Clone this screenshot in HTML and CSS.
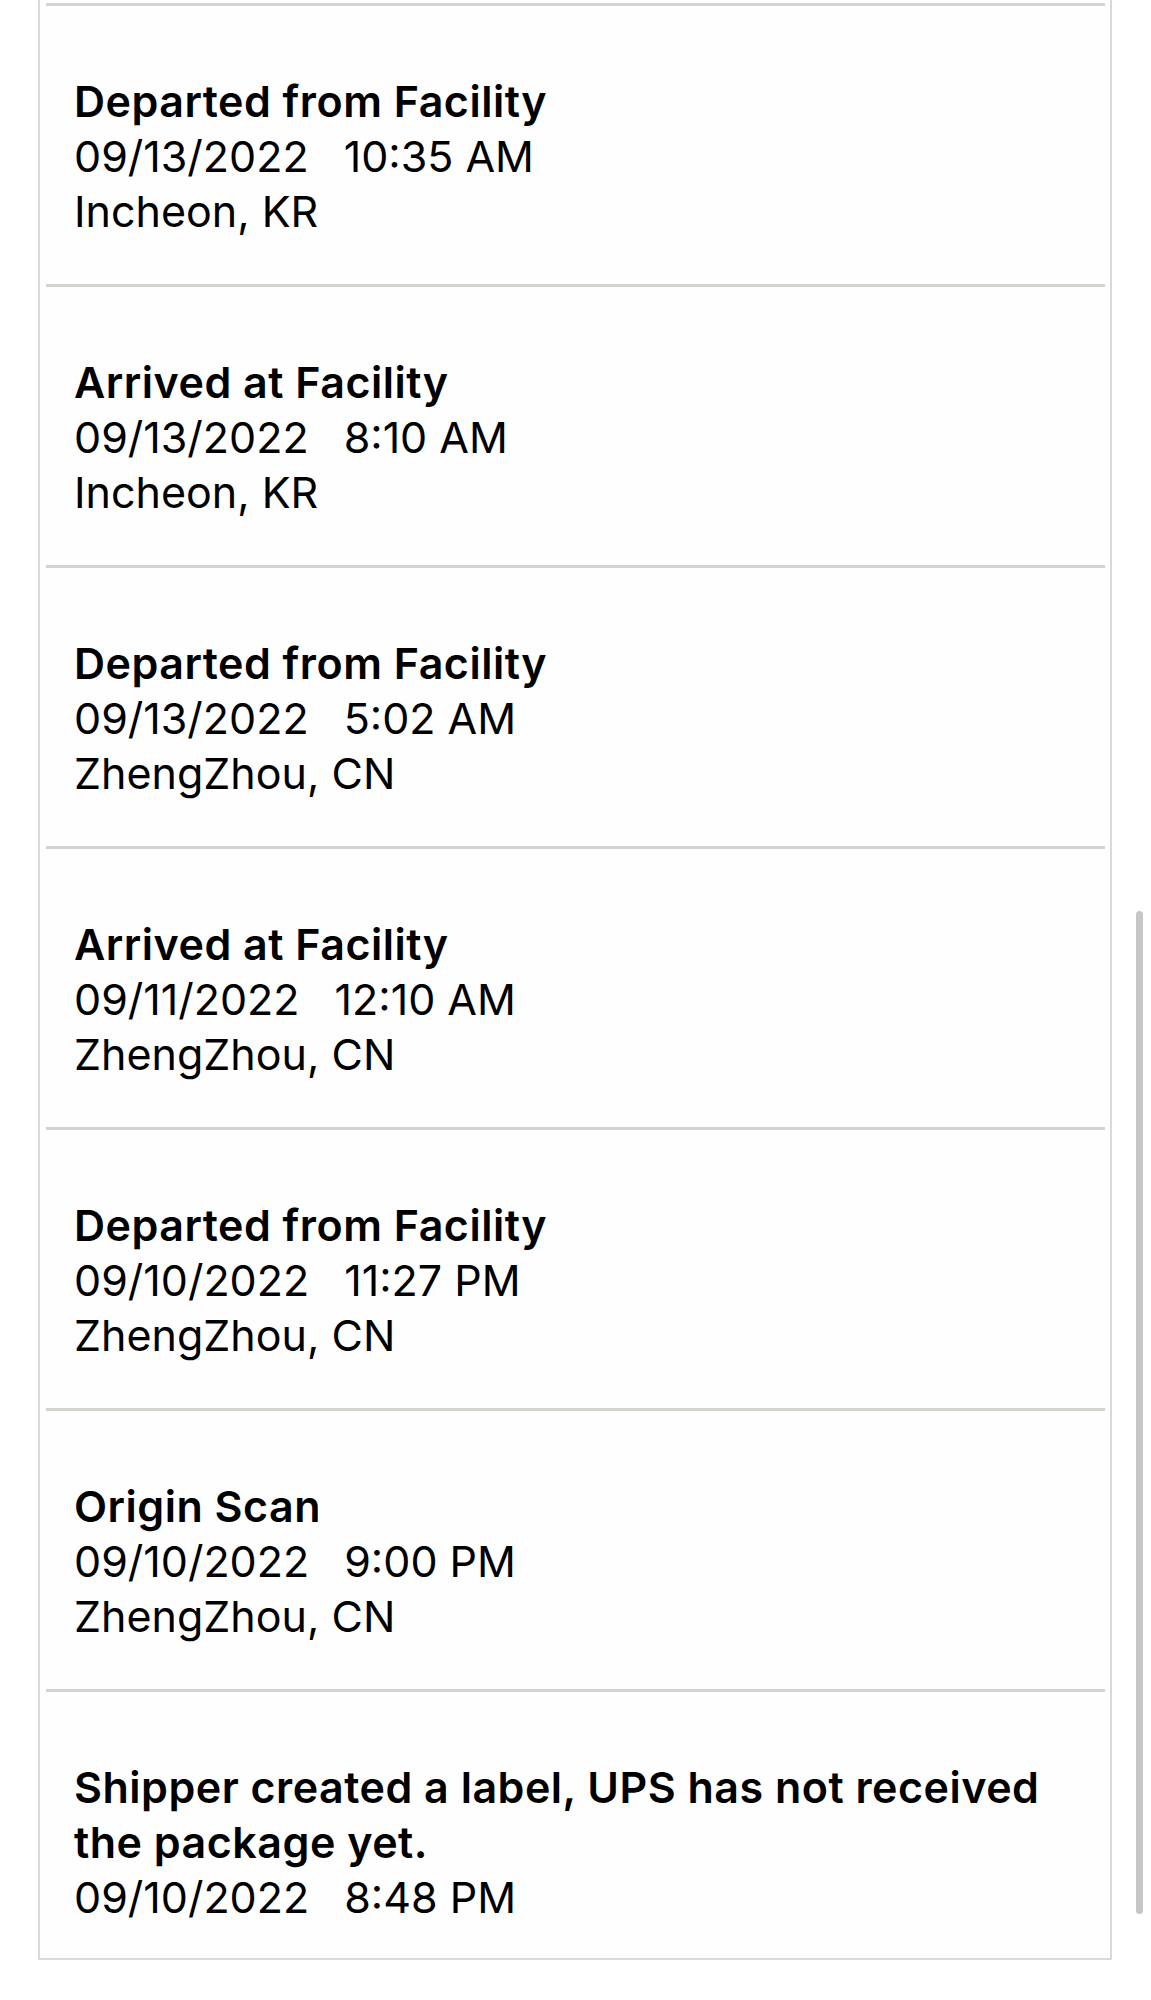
FILE: index.html
```html
<!DOCTYPE html>
<html lang="en">
<head>
<meta charset="utf-8">
<title>Tracking history</title>
<link rel="stylesheet" href="styles.css">
</head>
<body>
<div class="card">
  <div class="event">
    <div class="title">Departed from Facility</div>
    <div class="when"><span class="date">09/13/2022</span><span>10:35 AM</span></div>
    <div class="place">Incheon, KR</div>
  </div>
  <div class="event">
    <div class="title">Arrived at Facility</div>
    <div class="when"><span class="date">09/13/2022</span><span>8:10 AM</span></div>
    <div class="place">Incheon, KR</div>
  </div>
  <div class="event">
    <div class="title">Departed from Facility</div>
    <div class="when"><span class="date">09/13/2022</span><span>5:02 AM</span></div>
    <div class="place">ZhengZhou, CN</div>
  </div>
  <div class="event">
    <div class="title">Arrived at Facility</div>
    <div class="when"><span class="date">09/11/2022</span><span>12:10 AM</span></div>
    <div class="place">ZhengZhou, CN</div>
  </div>
  <div class="event">
    <div class="title">Departed from Facility</div>
    <div class="when"><span class="date">09/10/2022</span><span>11:27 PM</span></div>
    <div class="place">ZhengZhou, CN</div>
  </div>
  <div class="event">
    <div class="title">Origin Scan</div>
    <div class="when"><span class="date">09/10/2022</span><span>9:00 PM</span></div>
    <div class="place">ZhengZhou, CN</div>
  </div>
  <div class="event event-last">
    <div class="title">Shipper created a label, UPS has not received the package yet.</div>
    <div class="when"><span class="date">09/10/2022</span><span>8:48 PM</span></div>
  </div>
</div>
<div class="scroll-indicator"></div>
</body>
</html>
```
FILE: styles.css
```css
html, body {
  margin: 0;
  padding: 0;
  background: #ffffff;
}

body {
  font-family: Inter, "Noto Sans", "Liberation Sans", sans-serif;
  color: #000000;
}

.card {
  margin-left: 38px;
  width: 1059px;
  border: 2px solid #dadada;
  border-top: none;
  padding: 3px 5px 0 6px;
  background: #fefefe;
}

.event {
  border-top: 3px solid #d3d3cf;
  padding: 68px 29px 45px 28px;
  font-size: 43px;
  line-height: 55px;
}

.event-last {
  padding-bottom: 33px;
}

.title {
  font-weight: 600;
  letter-spacing: 0.5px;
}

.when {
  display: flex;
}

.date {
  margin-right: 35px;
}

.scroll-indicator {
  position: fixed;
  top: 911px;
  right: 8px;
  width: 7px;
  height: 1003px;
  border-radius: 4px;
  background: #c6c6c6;
}
```
